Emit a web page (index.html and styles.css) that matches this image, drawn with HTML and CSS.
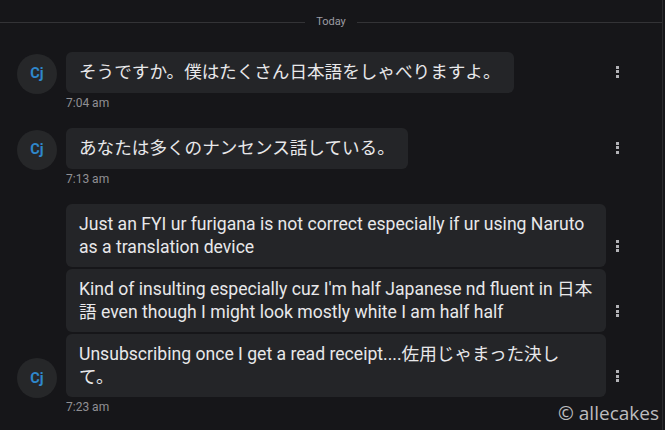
FILE: index.html
```html
<!DOCTYPE html>
<html lang="ja">
<head>
<meta charset="utf-8">
<link rel="stylesheet" href="styles.css">
</head>
<body>
<div class="pane">
  <div class="divider"><span class="line"></span><span class="day">Today</span><span class="line"></span></div>

  <div class="group">
    <div class="avatar">Cj</div>
    <div class="msgs">
      <div class="msg"><div class="bubble">そうですか。僕はたくさん日本語をしゃべりますよ。</div><div class="kebab"><i></i><i></i><i></i></div></div>
    </div>
    <div class="time">7:04 am</div>
  </div>

  <div class="group">
    <div class="avatar">Cj</div>
    <div class="msgs">
      <div class="msg"><div class="bubble">あなたは多くのナンセンス話している。</div><div class="kebab"><i></i><i></i><i></i></div></div>
    </div>
    <div class="time">7:13 am</div>
  </div>

  <div class="group">
    <div class="avatar">Cj</div>
    <div class="msgs">
      <div class="msg"><div class="bubble">Just an FYI ur furigana is not correct especially if ur using Naruto as a translation device</div><div class="kebab"><i></i><i></i><i></i></div></div>
      <div class="msg"><div class="bubble">Kind of insulting especially cuz I'm half Japanese nd fluent in 日本語 even though I might look mostly white I am half half</div><div class="kebab"><i></i><i></i><i></i></div></div>
      <div class="msg"><div class="bubble">Unsubscribing once I get a read receipt....佐用じゃまった決して。</div><div class="kebab"><i></i><i></i><i></i></div></div>
    </div>
    <div class="time">7:23 am</div>
  </div>

  <div class="watermark">© allecakes</div>
</div>
</body>
</html>
```
FILE: styles.css
```css
html, body {
  margin: 0;
  padding: 0;
  background: #161619;
}
body {
  width: 665px;
  height: 430px;
  overflow: hidden;
  font-family: Roboto, "Noto Sans CJK JP", sans-serif;
  color: #e6e6e8;
}
.pane {
  position: relative;
  width: 663px;
  height: 430px;
  box-sizing: border-box;
  border-right: 1px solid #2b2b2e;
}
.divider {
  display: flex;
  align-items: center;
  gap: 11px;
  padding-top: 15px;
  height: 14px;
}
.divider .line {
  flex: 1;
  height: 1px;
  background: #333336;
}
.day {
  font-size: 11px;
  line-height: 14px;
  color: #9c9ca3;
}
.group {
  display: grid;
  grid-template-columns: 40px auto;
  column-gap: 9px;
  padding-left: 17px;
  margin-top: 18.5px;
}
.divider + .group {
  margin-top: 23px;
}
.avatar {
  grid-column: 1;
  grid-row: 1;
  align-self: end;
  margin-bottom: -1px;
  width: 40px;
  height: 40px;
  border-radius: 50%;
  background: #262729;
  color: #2f87cc;
  font-weight: 700;
  font-size: 14.5px;
  display: flex;
  align-items: center;
  justify-content: center;
}
.msgs {
  grid-column: 2;
  grid-row: 1;
  display: flex;
  flex-direction: column;
  gap: 2px;
}
.msg {
  display: grid;
  grid-template-columns: 540px 22px;
  align-items: end;
}
.bubble {
  justify-self: start;
  box-sizing: border-box;
  max-width: 540px;
  padding: 9px 13px;
  background: #242528;
  border-radius: 6px;
  font-size: 17.6px;
  line-height: 22.5px;
  color: #e8e8ea;
}
.kebab {
  display: flex;
  flex-direction: column;
  gap: 1.5px;
  margin-left: 10px;
  margin-bottom: 15px;
}
.kebab i {
  display: block;
  width: 3px;
  height: 3px;
  background: #b2b2b6;
}
.time {
  grid-column: 2;
  grid-row: 2;
  margin-top: 3px;
  font-size: 12px;
  line-height: 14px;
  color: #909094;
}
.watermark {
  position: absolute;
  right: 3px;
  bottom: 6px;
  font-family: "Open Sans", sans-serif;
  font-size: 19px;
  line-height: 22px;
  color: #bdbdbf;
}
```
